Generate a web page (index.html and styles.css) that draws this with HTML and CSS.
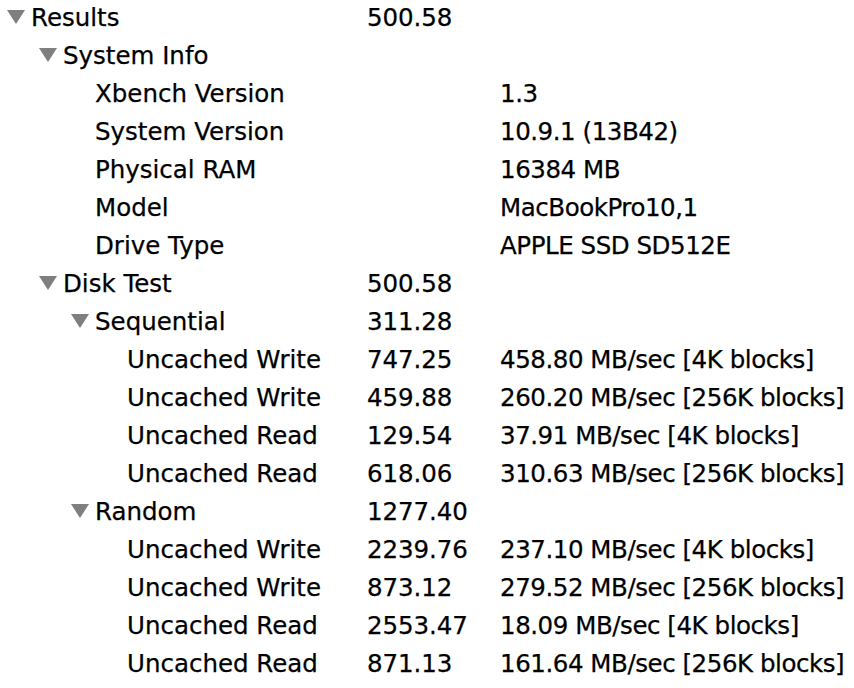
FILE: index.html
```html
<!DOCTYPE html>
<html>
<head>
<meta charset="utf-8">
<link rel="stylesheet" href="styles.css">
</head>
<body>
<div class="outline">
  <div class="row"><div class="name l0"><span class="tri"><svg viewBox="0 0 18 14" width="18" height="14"><polygon points="0,0 18,0 9,14" /></svg></span>Results</div><div class="score">500.58</div><div class="info"></div></div>
  <div class="row"><div class="name l1"><span class="tri"><svg viewBox="0 0 18 14" width="18" height="14"><polygon points="0,0 18,0 9,14" /></svg></span>System Info</div><div class="score"></div><div class="info"></div></div>
  <div class="row"><div class="name l2"><span class="tri"></span>Xbench Version</div><div class="score"></div><div class="info">1.3</div></div>
  <div class="row"><div class="name l2"><span class="tri"></span>System Version</div><div class="score"></div><div class="info">10.9.1 (13B42)</div></div>
  <div class="row"><div class="name l2"><span class="tri"></span>Physical RAM</div><div class="score"></div><div class="info">16384 MB</div></div>
  <div class="row"><div class="name l2"><span class="tri"></span>Model</div><div class="score"></div><div class="info">MacBookPro10,1</div></div>
  <div class="row"><div class="name l2"><span class="tri"></span>Drive Type</div><div class="score"></div><div class="info">APPLE SSD SD512E</div></div>
  <div class="row"><div class="name l1"><span class="tri"><svg viewBox="0 0 18 14" width="18" height="14"><polygon points="0,0 18,0 9,14" /></svg></span>Disk Test</div><div class="score">500.58</div><div class="info"></div></div>
  <div class="row"><div class="name l2"><span class="tri"><svg viewBox="0 0 18 14" width="18" height="14"><polygon points="0,0 18,0 9,14" /></svg></span>Sequential</div><div class="score">311.28</div><div class="info"></div></div>
  <div class="row"><div class="name l3"><span class="tri"></span>Uncached Write</div><div class="score">747.25</div><div class="info">458.80 MB/sec [4K blocks]</div></div>
  <div class="row"><div class="name l3"><span class="tri"></span>Uncached Write</div><div class="score">459.88</div><div class="info">260.20 MB/sec [256K blocks]</div></div>
  <div class="row"><div class="name l3"><span class="tri"></span>Uncached Read</div><div class="score">129.54</div><div class="info">37.91 MB/sec [4K blocks]</div></div>
  <div class="row"><div class="name l3"><span class="tri"></span>Uncached Read</div><div class="score">618.06</div><div class="info">310.63 MB/sec [256K blocks]</div></div>
  <div class="row"><div class="name l2"><span class="tri"><svg viewBox="0 0 18 14" width="18" height="14"><polygon points="0,0 18,0 9,14" /></svg></span>Random</div><div class="score">1277.40</div><div class="info"></div></div>
  <div class="row"><div class="name l3"><span class="tri"></span>Uncached Write</div><div class="score">2239.76</div><div class="info">237.10 MB/sec [4K blocks]</div></div>
  <div class="row"><div class="name l3"><span class="tri"></span>Uncached Write</div><div class="score">873.12</div><div class="info">279.52 MB/sec [256K blocks]</div></div>
  <div class="row"><div class="name l3"><span class="tri"></span>Uncached Read</div><div class="score">2553.47</div><div class="info">18.09 MB/sec [4K blocks]</div></div>
  <div class="row"><div class="name l3"><span class="tri"></span>Uncached Read</div><div class="score">871.13</div><div class="info">161.64 MB/sec [256K blocks]</div></div>
</div>
</body>
</html>
```
FILE: styles.css
```css
html, body {
  margin: 0;
  padding: 0;
  background: #ffffff;
}
body {
  font-family: "DejaVu Sans", "Liberation Sans", sans-serif;
  font-size: 24.5px;
  color: #000000;
  overflow: hidden;
  -webkit-text-stroke: 0.25px #000000;
}
.outline {
  margin-top: -2px;
}
.row {
  display: grid;
  grid-template-columns: 367px 133px 1fr;
  height: 38px;
  align-items: center;
  white-space: nowrap;
}
.name {
  display: flex;
  align-items: center;
}
.l0 { padding-left: 7px; }
.l1 { padding-left: 39px; }
.l2 { padding-left: 71px; }
.l3 { padding-left: 103px; }
.tri {
  display: inline-flex;
  width: 24px;
  flex: none;
  align-items: center;
}
.tri svg {
  fill: #7f7f7f;
  display: block;
}
.score {
  letter-spacing: -0.1px;
}
.info {
  letter-spacing: -0.45px;
}
```
